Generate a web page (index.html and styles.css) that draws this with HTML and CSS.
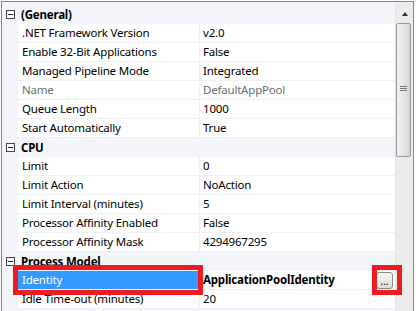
FILE: index.html
```html
<!DOCTYPE html>
<html lang="en">
<head>
    <meta charset="UTF-8">
    <title>Application Pool Properties</title>
    <link rel="stylesheet" href="styles.css">
</head>
<body>
    <div class="grid">
        <div class="rows">
            <div class="cat"><span class="toggle"></span><span class="cat-name">(General)</span></div>
            <div class="prop"><div class="name">.NET Framework Version</div><div class="value">v2.0</div></div>
            <div class="prop"><div class="name">Enable 32-Bit Applications</div><div class="value">False</div></div>
            <div class="prop"><div class="name">Managed Pipeline Mode</div><div class="value">Integrated</div></div>
            <div class="prop disabled"><div class="name">Name</div><div class="value">DefaultAppPool</div></div>
            <div class="prop"><div class="name">Queue Length</div><div class="value">1000</div></div>
            <div class="prop"><div class="name">Start Automatically</div><div class="value">True</div></div>

            <div class="cat"><span class="toggle"></span><span class="cat-name">CPU</span></div>
            <div class="prop"><div class="name">Limit</div><div class="value">0</div></div>
            <div class="prop"><div class="name">Limit Action</div><div class="value">NoAction</div></div>
            <div class="prop"><div class="name">Limit Interval (minutes)</div><div class="value">5</div></div>
            <div class="prop"><div class="name">Processor Affinity Enabled</div><div class="value">False</div></div>
            <div class="prop"><div class="name">Processor Affinity Mask</div><div class="value">4294967295</div></div>

            <div class="cat"><span class="toggle"></span><span class="cat-name">Process Model</span></div>
            <div class="prop selected"><div class="name">Identity</div><div class="value bold">ApplicationPoolIdentity<button class="dots">...</button></div></div>
            <div class="prop"><div class="name">Idle Time-out (minutes)</div><div class="value">20</div></div>
        </div>
        <div class="scrollbar">
            <div class="arrow"></div>
            <div class="thumb"><span class="grip"></span></div>
        </div>
        <!-- annotation boxes drawn over the grid -->
        <div class="mark mark-name"></div>
        <div class="mark mark-button"></div>
    </div>
</body>
</html>
```

FILE: styles.css
```css
body {
    margin: 0;
    font-family: "Noto Sans", "Open Sans", sans-serif;
    font-size: 11.5px;
    letter-spacing: -0.2px;
    color: #000;
    background-color: #fff;
}
.grid {
    position: relative;
    display: flex;
    margin: 1px 0 0 1px;
    width: 413px;
    height: 340px;
    border: 1px solid #828790;
    box-sizing: border-box;
    overflow: hidden;
}
.rows {
    flex: 1;
    padding-top: 3px;
    background-color: #f3f5fa;
}
.cat,
.prop {
    display: flex;
    height: 19px;
}
.cat {
    align-items: center;
    background-color: #f3f5fa;
}
.toggle {
    position: relative;
    width: 7px;
    height: 7px;
    margin: 0 6px 1px 4px;
    border: 1px solid #444;
    background-color: #fff;
}
.toggle::after {
    content: "";
    position: absolute;
    left: 1px;
    top: 3px;
    width: 5px;
    height: 1px;
    background-color: #222;
}
.cat-name {
    font-weight: bold;
}
.prop .name,
.prop .value {
    height: 18px;
    line-height: 18px;
    border-bottom: 1px solid #eef0f5;
    background-color: #fff;
    white-space: nowrap;
    overflow: hidden;
}
.prop .name {
    width: 177px;
    margin-left: 16px;
    padding-left: 4px;
    border-right: 1px solid #eef0f5;
}
.prop .value {
    flex: 1;
    position: relative;
    padding-left: 3px;
}
.disabled .name,
.disabled .value {
    color: #6d6d6d;
}
.selected .name {
    background-color: #3399ff;
    color: #fff;
}
.bold {
    font-weight: bold;
}
.dots {
    position: absolute;
    right: 2px;
    top: 1px;
    width: 17px;
    height: 17px;
    padding: 0;
    border: 1px solid #8a8a8a;
    border-radius: 3px;
    background: linear-gradient(#f6f6f6, #dcdcdc);
    font-family: "Noto Sans", sans-serif;
    font-size: 10px;
    font-weight: normal;
    letter-spacing: 0;
    line-height: 12px;
    color: #000;
}
.scrollbar {
    position: relative;
    width: 17px;
    background-color: #ebebeb;
    border-left: 1px solid #e3e3e3;
}
.arrow {
    margin: 10px auto 0;
    width: 0;
    height: 0;
    border-left: 3px solid transparent;
    border-right: 3px solid transparent;
    border-bottom: 4px solid #333;
}
.thumb {
    position: absolute;
    left: 0;
    top: 21px;
    width: 13px;
    height: 132px;
    border: 1px solid #999;
    border-radius: 2px;
    background: linear-gradient(to right, #f2f2f2, #e6e6e6 50%, #d3d3d3);
}
.grip {
    position: absolute;
    left: 3px;
    top: 62px;
    width: 7px;
    height: 1px;
    background-color: #777;
    box-shadow: 0 2px 0 #777, 0 4px 0 #777;
}
.mark {
    position: absolute;
    border: 5px solid #ed1c24;
    box-sizing: border-box;
}
.mark-name {
    left: 11px;
    top: 263px;
    width: 190px;
    height: 30px;
}
.mark-button {
    left: 370px;
    top: 263px;
    width: 30px;
    height: 30px;
}
```
